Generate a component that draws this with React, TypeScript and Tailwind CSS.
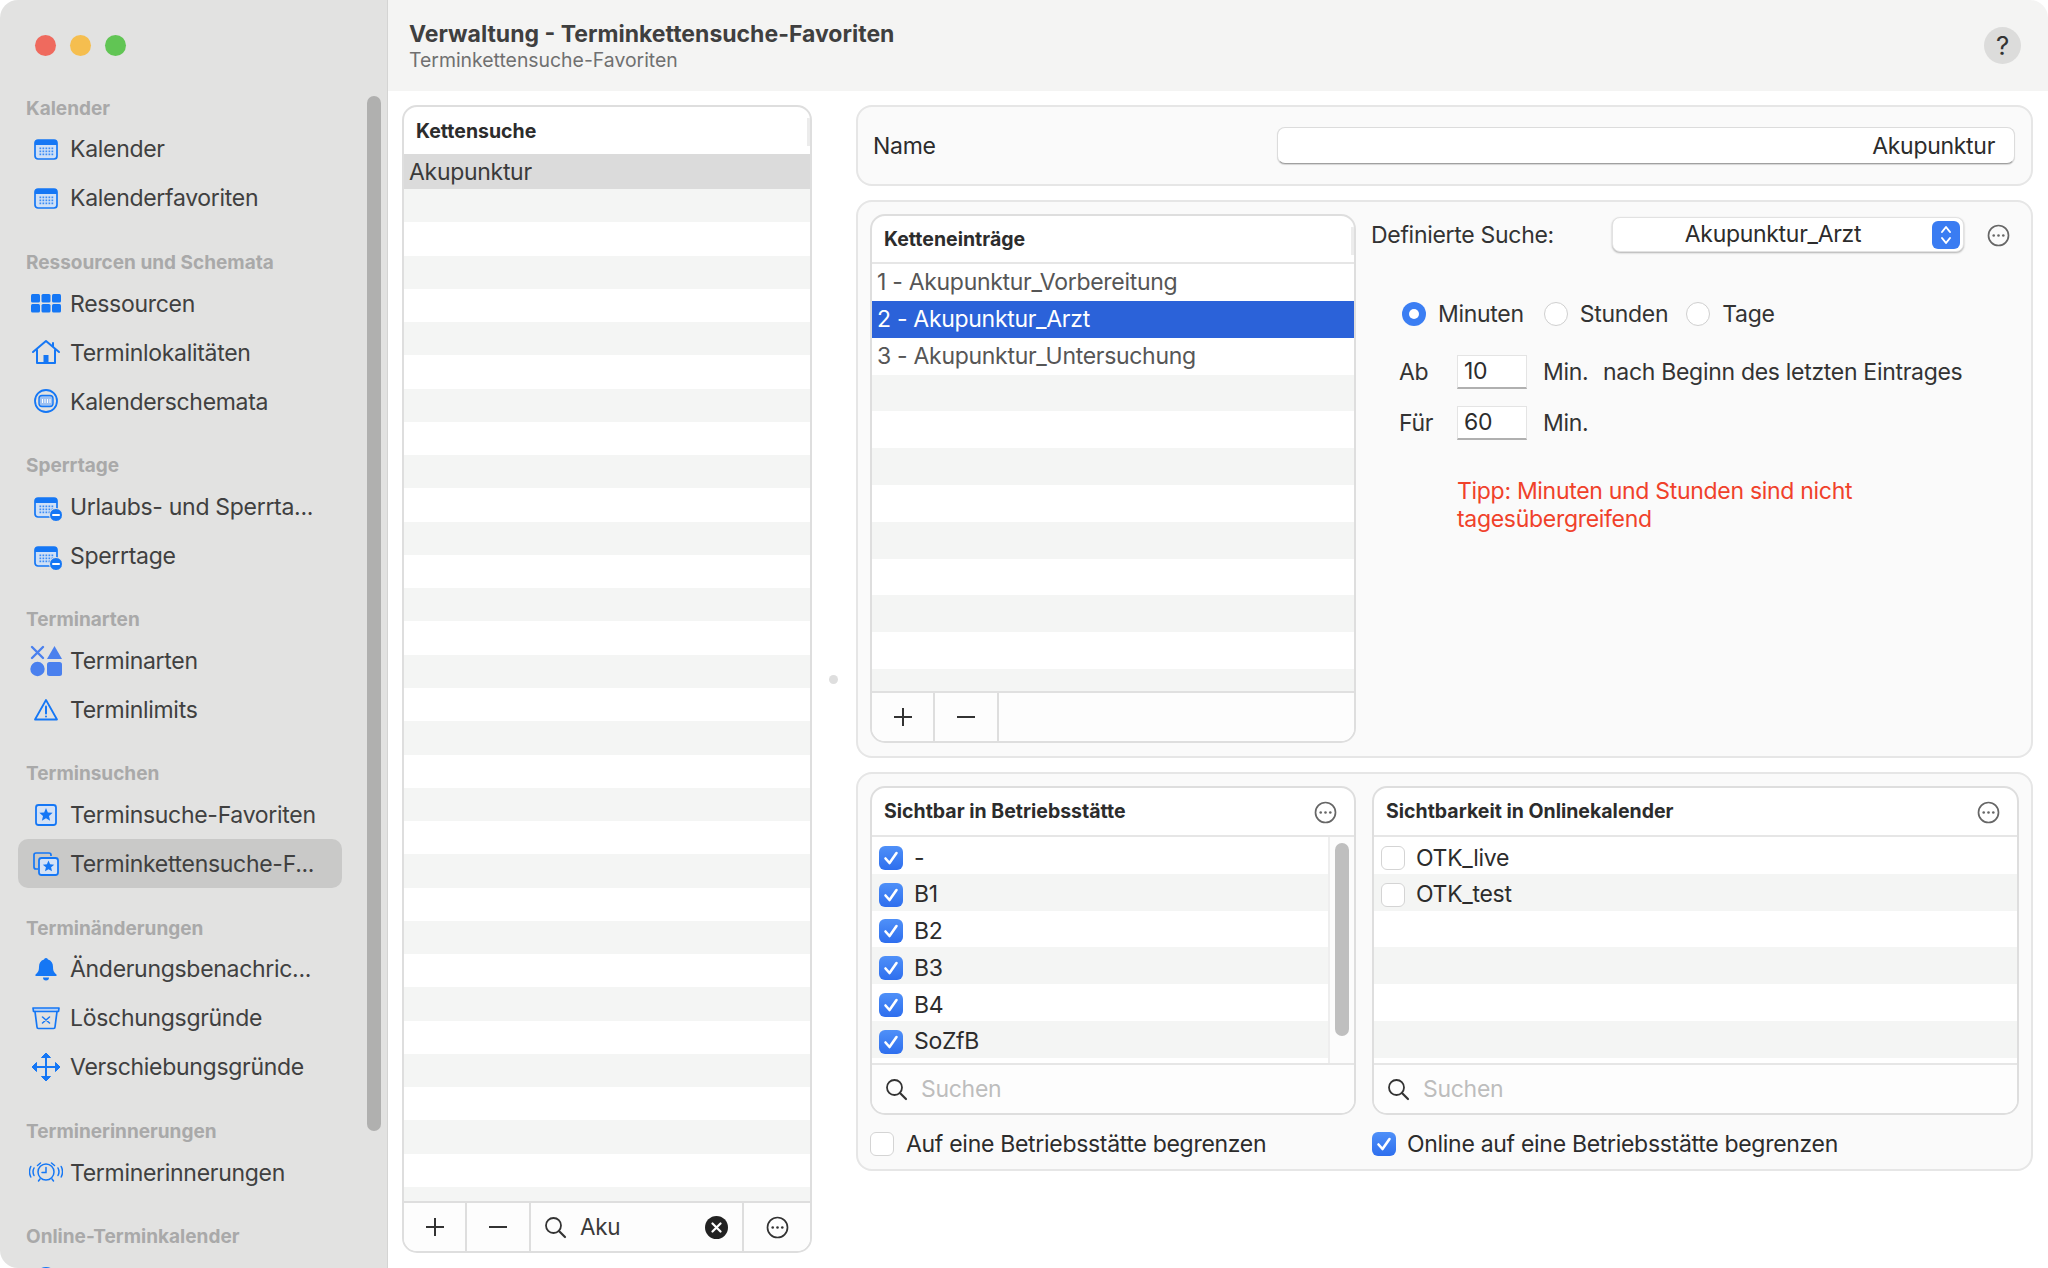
import React from "react";

const B = "#1577f5";

function Cal({ minus }: { minus?: boolean }) {
  return (
    <svg width="32" height="28" viewBox="0 0 32 28">
      <rect x="5" y="5" width="22" height="19" rx="3" fill="#cfe0f7" stroke={B} strokeWidth="1.7" />
      <path d="M5 8a3 3 0 0 1 3-3h16a3 3 0 0 1 3 3v2H5z" fill={B} />
      {[0, 1, 2, 3, 4].map((i) =>
        [0, 1, 2].map((j) => <rect key={i + "-" + j} x={9.5 + i * 3} y={12.5 + j * 3} width="1.7" height="1.7" fill={B} opacity="0.8" />)
      )}
      {minus && (
        <>
          <circle cx="26" cy="22" r="6.5" fill={B} stroke="#e2e2e1" strokeWidth="1" />
          <rect x="22" y="21" width="8" height="2" rx="1" fill="#fff" />
        </>
      )}
    </svg>
  );
}
const GridI = () => (
  <svg width="32" height="22" viewBox="0 0 32 22" fill={B}>
    {[1, 11.5, 22].map((x) => [2, 12].map((y) => <rect key={x + "-" + y} x={x} y={y} width="9" height="8.5" rx="1.5" />))}
  </svg>
);
const House = () => (
  <svg width="30" height="26" viewBox="0 0 30 26" fill="none" stroke={B} strokeWidth="2" strokeLinecap="round" strokeLinejoin="round">
    <path d="M2 13 15 2l13 11" />
    <path d="M22 4v3" />
    <path d="M6 11v13h18V11" />
    <rect x="12.5" y="16" width="5" height="8" fill={B} stroke="none" />
  </svg>
);
const CircleCal = () => (
  <svg width="28" height="26" viewBox="0 0 28 26" fill="none">
    <ellipse cx="14" cy="13" rx="11" ry="11" stroke={B} strokeWidth="1.8" />
    <rect x="7" y="7.5" width="14" height="11" rx="3" fill="#9cc0f2" stroke={B} strokeWidth="1.4" />
    <path d="M10.5 11v4M13 11v4M15.5 11v4M18 11v4" stroke="#fff" strokeWidth="1" />
  </svg>
);
const Shapes = () => (
  <svg width="34" height="32" viewBox="0 0 34 32" fill="#4a80ee">
    <path d="M3 2l11 11M14 2 3 13" stroke="#4a80ee" strokeWidth="2.4" fill="none" strokeLinecap="round" />
    <path d="M25.5 1 33 14H18z" />
    <circle cx="8.5" cy="24" r="7.2" />
    <rect x="18" y="17" width="15" height="14" rx="2.5" />
  </svg>
);
const Warn = () => (
  <svg width="28" height="26" viewBox="0 0 28 26" fill="none" stroke={B} strokeWidth="1.8" strokeLinejoin="round">
    <path d="M14 3 25 22.5H3z" />
    <path d="M14 9.5v7" strokeWidth="2" strokeLinecap="round" />
    <circle cx="14" cy="19.6" r="1" fill={B} stroke="none" />
  </svg>
);
const Star = ({ x, y, r }: { x: number; y: number; r: number }) => {
  const pts: string[] = [];
  for (let i = 0; i < 10; i++) {
    const a = -Math.PI / 2 + (i * Math.PI) / 5;
    const rr = i % 2 === 0 ? r : r * 0.45;
    pts.push(`${(x + rr * Math.cos(a)).toFixed(2)},${(y + rr * Math.sin(a)).toFixed(2)}`);
  }
  return <polygon points={pts.join(" ")} fill={B} />;
};
const StarBox = () => (
  <svg width="26" height="26" viewBox="0 0 26 26" fill="none">
    <rect x="3" y="3" width="20" height="20" rx="2.5" fill="#d4e2f6" stroke={B} strokeWidth="1.8" />
    <Star x={13} y={13} r={7} />
  </svg>
);
const StarBox2 = () => (
  <svg width="30" height="26" viewBox="0 0 30 26" fill="none">
    <path d="M20 5V4a2 2 0 0 0-2-2H5a2 2 0 0 0-2 2v12a2 2 0 0 0 2 2h2" stroke={B} strokeWidth="1.7" />
    <rect x="8" y="7" width="19" height="17" rx="2.5" fill="#d4e2f6" stroke={B} strokeWidth="1.8" />
    <Star x={17.5} y={15.5} r={6} />
  </svg>
);
const Bell = () => (
  <svg width="26" height="26" viewBox="0 0 26 26" fill={B}>
    <path d="M13 2a2 2 0 0 1 2 1.6c3.4 1 5 3.8 5 7.2 0 4.400 1.200 5.800 3.400 7.800.6.6.3 1.400-.5 1.400H3.100c-.8 0-1.100-.8-.5-1.400 2.200-2 3.400-3.400 3.400-7.800 0-3.400 1.600-6.200 5-7.200A2 2 0 0 1 13 2z" />
    <path d="M10 21.500h6a3 3 0 0 1-6 0z" />
  </svg>
);
const Tray = () => (
  <svg width="30" height="26" viewBox="0 0 30 26" fill="none" stroke={B} strokeWidth="1.7" strokeLinejoin="round" strokeLinecap="round">
    <path d="M2 3h26l-.5 3.500H2.500z" fill="#b9d2f5" />
    <path d="M4 6.500 6 22a1.500 1.500 0 0 0 1.500 1.500h15A1.500 1.500 0 0 0 24 22l2-15.500" />
    <path d="M11.500 12l7 6M18.500 12l-7 6" strokeWidth="1.5" />
  </svg>
);
const Move = () => (
  <svg width="30" height="30" viewBox="0 0 30 30" fill={B} stroke={B} strokeWidth="1">
    <path d="M15 4v22M4 15h22" strokeWidth="2" fill="none" />
    <path d="M15 1l4.500 4.500h-9zM15 29l4.500-4.500h-9zM1 15l4.500-4.500v9zM29 15l-4.500-4.500v9z" strokeLinejoin="round" />
  </svg>
);
const Alarm = () => (
  <svg width="34" height="26" viewBox="0 0 34 26" fill="none" stroke={B} strokeWidth="1.500" strokeLinecap="round">
    <circle cx="17" cy="13" r="8" />
    <path d="M17 8.500V13.500h-4" />
    <path d="M8.500 6.500l3-2.500M25.500 6.500l-3-2.500M11 20l-1.500 2M23 20l1.500 2" />
    <path d="M5 9c-1.300 2.500-1.300 5 0 7.500M1.800 7.500c-1.800 3.500-1.800 7 0 10.500M29 9c1.300 2.500 1.300 5 0 7.500M32.200 7.500c1.800 3.500 1.800 7 0 10.500" />
  </svg>
);
const Globe = () => (
  <svg width="26" height="26" viewBox="0 0 26 26" fill={B}>
    <circle cx="13" cy="13" r="11" />
  </svg>
);

const More = ({ c = "#666666", size = 23 }: { c?: string; size?: number }) => (
  <svg width={size} height={size} viewBox="0 0 23 23" fill="none">
    <circle cx="11.500" cy="11.500" r="10" stroke={c} strokeWidth="1.700" />
    <circle cx="6.700" cy="11.500" r="1.300" fill={c} />
    <circle cx="11.500" cy="11.500" r="1.300" fill={c} />
    <circle cx="16.300" cy="11.500" r="1.300" fill={c} />
  </svg>
);
const Search = () => (
  <svg width="24" height="24" viewBox="0 0 24 24" fill="none" stroke="#333" strokeWidth="1.800" strokeLinecap="round">
    <circle cx="10.500" cy="10.500" r="7.500" />
    <path d="M16 16l6 6" strokeWidth="2.200" />
  </svg>
);
const Plus = () => (
  <svg width="20" height="20" viewBox="0 0 20 20" stroke="#333" strokeWidth="2"><path d="M10 1v18M1 10h18" /></svg>
);
const Minus = () => (
  <svg width="20" height="20" viewBox="0 0 20 20" stroke="#333" strokeWidth="2"><path d="M1 10h18" /></svg>
);

type Item = { icon: React.ReactNode; label: string; active?: boolean };
const sections: { title: string; items: Item[] }[] = [
  { title: "Kalender", items: [{ icon: <Cal />, label: "Kalender" }, { icon: <Cal />, label: "Kalenderfavoriten" }] },
  {
    title: "Ressourcen und Schemata",
    items: [
      { icon: <GridI />, label: "Ressourcen" },
      { icon: <House />, label: "Terminlokalitäten" },
      { icon: <CircleCal />, label: "Kalenderschemata" },
    ],
  },
  { title: "Sperrtage", items: [{ icon: <Cal minus />, label: "Urlaubs- und Sperrta..." }, { icon: <Cal minus />, label: "Sperrtage" }] },
  { title: "Terminarten", items: [{ icon: <Shapes />, label: "Terminarten" }, { icon: <Warn />, label: "Terminlimits" }] },
  {
    title: "Terminsuchen",
    items: [
      { icon: <StarBox />, label: "Terminsuche-Favoriten" },
      { icon: <StarBox2 />, label: "Terminkettensuche-F...", active: true },
    ],
  },
  {
    title: "Terminänderungen",
    items: [
      { icon: <Bell />, label: "Änderungsbenachric..." },
      { icon: <Tray />, label: "Löschungsgründe" },
      { icon: <Move />, label: "Verschiebungsgründe" },
    ],
  },
  { title: "Terminerinnerungen", items: [{ icon: <Alarm />, label: "Terminerinnerungen" }] },
  { title: "Online-Terminkalender", items: [{ icon: <Globe />, label: "" }] },
];

function Sidebar() {
  return (
    <aside className="relative w-[388px] h-full shrink-0 bg-[#e2e2e1] border-r border-r-[#d4d4d3] overflow-hidden">
      <div className="flex gap-[14px] pl-[35px] pt-[35px]">
        <span className="w-[21px] h-[21px] rounded-full bg-[#ef6a5e]" />
        <span className="w-[21px] h-[21px] rounded-full bg-[#f5be4f]" />
        <span className="w-[21px] h-[21px] rounded-full bg-[#61c554]" />
      </div>
      <nav className="pt-[12.5px]">
        {sections.map((s) => (
          <div key={s.title} className="mt-[27.7px]">
            <div className="h-[24px] mb-[4.5px] pl-[26px] flex items-center text-[19px] font-bold tracking-normal text-[#a9a9a9] leading-none whitespace-nowrap">{s.title}</div>
            {s.items.map((it) => (
              <div
                key={it.label + s.title}
                className={`ml-[18px] mr-[45px] h-[49px] pl-[8px] flex items-center rounded-[10px] ${it.active ? "bg-[#c9c9c8]" : ""}`}
              >
                <span className="w-[40px] flex justify-center items-center shrink-0">{it.icon}</span>
                <span className="ml-[4px] pt-[1px] text-[23px] text-[#404040] whitespace-nowrap">{it.label}</span>
              </div>
            ))}
          </div>
        ))}
      </nav>
      <div className="absolute left-[367px] top-[96px] w-[14px] h-[1035px] rounded-full bg-[#b0b0af]" />
    </aside>
  );
}

function Stripes({ n, h, firstGray }: { n: number; h: number; firstGray: boolean }) {
  return (
    <>
      {Array.from({ length: n }).map((_, i) => (
        <div key={i} className={(i % 2 === 0) === firstGray ? "bg-[#f4f5f4]" : "bg-white"} style={{ height: h }} />
      ))}
    </>
  );
}

const panel = "border-2 border-[#e6e6e6] bg-[#fafafa] rounded-[16px]";
const list = "border-2 border-[#dedede] bg-white rounded-[15px] overflow-hidden flex flex-col";
const headText = "text-[19.5px] font-bold tracking-normal text-[#2c2c2c]";

function ToolCell({ w, children }: { w: string; children?: React.ReactNode }) {
  return <div className={`${w} h-full shrink-0 flex items-center justify-center border-r-2 border-r-[#dedede]`}>{children}</div>;
}

function LeftList() {
  return (
    <section className={`${list} w-[410px] h-[1148px] shrink-0`}>
      <div className={`relative h-[47px] shrink-0 flex items-center pl-[12px] pt-[3px] ${headText}`}>
        Kettensuche
        <span className="absolute right-0 top-[11px] w-[3px] h-[28px] bg-[#ececec]" />
      </div>
      <div className="h-[35px] shrink-0 bg-[#dbdbdb] flex items-center pl-[5px] pt-[2px] text-[23px] text-[#3a3a3a]">Akupunktur</div>
      <div className="flex-1 overflow-hidden">
        <Stripes n={31} h={33.27} firstGray />
      </div>
      <div className="h-[50px] shrink-0 bg-[#fdfdfd] border-t-2 border-t-[#dedede] flex items-stretch">
        <ToolCell w="w-[63px]"><Plus /></ToolCell>
        <ToolCell w="w-[64px]"><Minus /></ToolCell>
        <div className="w-[213px] shrink-0 flex items-center border-r-2 border-r-[#dedede] pl-[12px] text-[22.5px] text-[#3a3a3a]">
          <Search />
          <span className="ml-[13px]">Aku</span>
          <span className="ml-auto mr-[14px] w-[23px] h-[23px] rounded-full bg-[#222222] flex items-center justify-center">
            <svg width="11" height="11" viewBox="0 0 11 11" stroke="#fff" strokeWidth="2.200" strokeLinecap="round"><path d="M1.500 1.500l8 8M9.500 1.500l-8 8" /></svg>
          </span>
        </div>
        <div className="flex-1 flex items-center justify-center"><More c="#333333" /></div>
      </div>
    </section>
  );
}

function ChainList() {
  const rows = ["1 - Akupunktur_Vorbereitung", "2 - Akupunktur_Arzt", "3 - Akupunktur_Untersuchung"];
  return (
    <div className={`${list} w-[486px] h-[529px] shrink-0`}>
      <div className={`relative h-[48px] shrink-0 flex items-center pl-[12px] pt-[2px] border-b-2 border-b-[#e6e6e6] ${headText}`}>
        Ketteneinträge
        <span className="absolute right-0 top-[11px] w-[3px] h-[28px] bg-[#ececec]" />
      </div>
      <div className="flex-1 overflow-hidden">
        {rows.map((r, i) => (
          <div
            key={r}
            className={`h-[36.9px] flex items-center pl-[5px] text-[23px] ${i === 1 ? "bg-[#2b62d9] text-white" : "bg-white text-[#565656]"}`}
          >
            {r}
          </div>
        ))}
        <Stripes n={9} h={36.8} firstGray />
      </div>
      <div className="h-[50px] shrink-0 bg-[#fdfdfd] border-t-2 border-t-[#e0e0e0] flex items-stretch">
        <ToolCell w="w-[63px]"><Plus /></ToolCell>
        <ToolCell w="w-[64px]"><Minus /></ToolCell>
      </div>
    </div>
  );
}

function Radio({ on, label, className = "" }: { on?: boolean; label: string; className?: string }) {
  return (
    <span className={`flex items-center gap-[12px] ${className}`}>
      {on ? (
        <span className="w-[24px] h-[24px] rounded-full bg-[#3b7ef3] flex items-center justify-center">
          <span className="w-[10px] h-[10px] rounded-full bg-white" />
        </span>
      ) : (
        <span className="w-[24px] h-[24px] rounded-full bg-white border border-[#cfcfcf]" />
      )}
      <span>{label}</span>
    </span>
  );
}

function NumField({ v }: { v: string }) {
  return (
    <span className="w-[70px] h-[34px] bg-white flex items-center pl-[6px] border border-[#e4e4e4] border-b-2 border-b-[#b0b0b0] text-[23px] text-[#2c2c2c]">{v}</span>
  );
}

function SearchDetails() {
  return (
    <div className="flex-1 pl-[15px] text-[23px] text-[#333333]">
      <div className="flex items-center h-[36px] mt-[3px]">
        <span className="w-[241px] shrink-0">Definierte Suche:</span>
        <div className="relative w-[352px] h-[35px] -mt-[1px] bg-white rounded-[8px] border border-[#e2e2e2] shadow-[0_1px_2px_rgba(0,0,0,0.3)] flex items-center justify-center pr-[30px] text-[#2c2c2c]">
          Akupunktur_Arzt
          <span className="absolute right-[3px] top-[3px] w-[28px] h-[28px] rounded-[6px] bg-[#3a7cf2] flex items-center justify-center">
            <svg width="14" height="22" viewBox="0 0 14 22" fill="none" stroke="#fff" strokeWidth="2" strokeLinecap="round" strokeLinejoin="round">
              <path d="M3 8l4-5 4 5M3 14l4 5 4-5" />
            </svg>
          </span>
        </div>
        <span className="ml-[23px]"><More /></span>
      </div>
      <div className="flex items-center gap-[20px] mt-[43px] pl-[31px] h-[36px]">
        <Radio on label="Minuten" />
        <Radio label="Stunden" />
        <Radio label="Tage" className="-ml-[2px]" />
      </div>
      <div className="mt-[23px] pl-[28px] flex items-center h-[34px]">
        <span className="w-[58px]">Ab</span>
        <NumField v="10" />
        <span className="ml-[16px] w-[60px]">Min.</span>
        <span>nach Beginn des letzten Eintrages</span>
      </div>
      <div className="mt-[17px] pl-[28px] flex items-center h-[34px]">
        <span className="w-[58px]">Für</span>
        <NumField v="60" />
        <span className="ml-[16px]">Min.</span>
      </div>
      <div className="mt-[37px] ml-[86px] w-[450px] text-[#f0412a] leading-[28px]">
        Tipp: Minuten und Stunden sind nicht tagesübergreifend
      </div>
    </div>
  );
}

function Check({ on }: { on?: boolean }) {
  return on ? (
    <span className="w-[24px] h-[24px] shrink-0 rounded-[6px] bg-gradient-to-b from-[#4f90f8] to-[#2e6eee] flex items-center justify-center">
      <svg width="16" height="16" viewBox="0 0 16 16" fill="none" stroke="#fff" strokeWidth="2.600" strokeLinecap="round" strokeLinejoin="round">
        <path d="M2.500 8.500 6.500 13 13.500 3" />
      </svg>
    </span>
  ) : (
    <span className="w-[24px] h-[24px] shrink-0 rounded-[6px] bg-white border border-[#d4d4d4]" />
  );
}

function CheckList({ title, w, rows, on, scroll }: { title: string; w: string; rows: string[]; on: boolean; scroll: boolean }) {
  return (
    <div className={`${list} ${w} h-[329px] shrink-0`}>
      <div className={`relative h-[49px] shrink-0 flex items-center pl-[12px] pr-[17px] pt-[1px] justify-between border-b-2 border-b-[#e6e6e6] ${headText}`}>
        {title}
        <More />
      </div>
      <div className="relative flex-1 overflow-hidden">
        {Array.from({ length: 6 }).map((_, i) => (
          <div key={i} className={`h-[36.75px] pt-[5px] flex items-center pl-[7px] ${i % 2 === 1 ? "bg-[#f4f5f4]" : "bg-white"} ${scroll ? "mr-[26px]" : ""}`}>
            {rows[i] !== undefined && (
              <>
                <Check on={on} />
                <span className="ml-[11px] text-[23px] text-[#2c2c2c]">{rows[i]}</span>
              </>
            )}
          </div>
        ))}
        {scroll && (
          <div className="absolute right-0 top-0 bottom-0 w-[26px] bg-[#fcfcfc] border-l-2 border-l-[#eeeeee]">
            <div className="absolute left-[5px] top-[6px] w-[14px] h-[193px] rounded-full bg-[#bfbfbf]" />
          </div>
        )}
      </div>
      <div className="h-[50px] shrink-0 border-t-2 border-t-[#e6e6e6] bg-[#fdfdfd] flex items-center pl-[12px]">
        <Search />
        <span className="ml-[13px] text-[23px] text-[#bdbdbd]">Suchen</span>
      </div>
    </div>
  );
}

export default function App() {
  return (
    <div className="w-[2048px] h-[1268px] bg-white overflow-hidden tracking-[-0.3px]" style={{ fontFamily: "Inter, 'Noto Sans', sans-serif" }}>
      <div className="flex w-full h-full rounded-[18px] overflow-hidden bg-white">
        <Sidebar />
        <main className="flex-1 flex flex-col min-w-0 relative">
          <header className="h-[91px] shrink-0 bg-[#f4f4f3] flex items-start justify-between pl-[21px] pr-[27px]">
            <div className="pt-[20px]">
              <div className="text-[23px] leading-[28px] font-bold tracking-normal text-[#3f3f3f] whitespace-nowrap">Verwaltung - Terminkettensuche-Favoriten</div>
              <div className="text-[19.4px] leading-[24px] tracking-normal text-[#707070] whitespace-nowrap">Terminkettensuche-Favoriten</div>
            </div>
            <span className="mt-[27px] w-[37px] h-[37px] rounded-full bg-[#dcdcdb] flex items-center justify-center text-[26px] text-[#333333]">?</span>
          </header>
          <div className="flex pt-[14px] pl-[14px]">
            <LeftList />
            <div className="ml-[44px] w-[1177px] flex flex-col gap-[14px]">
              <div className={`${panel} h-[81px] flex items-center pl-[15px] pr-[16px] justify-between`}>
                <span className="text-[23px] text-[#2c2c2c] pt-[2px]">Name</span>
                <div className="w-[738px] h-[37px] bg-white rounded-[8px] border border-[#dcdcdc] border-b-[#a0a0a0] shadow-[0_1px_1px_rgba(0,0,0,0.15)] flex items-center justify-end pr-[19px] pt-[2px] text-[23px] text-[#2c2c2c]">Akupunktur</div>
              </div>
              <div className={`${panel} h-[558px] p-[12px] flex`}>
                <ChainList />
                <SearchDetails />
              </div>
              <div className={`${panel} h-[399px] pt-[12px] pl-[12px]`}>
                <div className="flex gap-[16px]">
                  <CheckList title="Sichtbar in Betriebsstätte" w="w-[486px]" rows={["-", "B1", "B2", "B3", "B4", "SoZfB"]} on scroll />
                  <CheckList title="Sichtbarkeit in Onlinekalender" w="w-[647px]" rows={["OTK_live", "OTK_test"]} on={false} scroll={false} />
                </div>
                <div className="flex mt-[16px] h-[26px] text-[23px] text-[#2c2c2c]">
                  <span className="w-[502px] flex items-center gap-[12px]"><Check /> Auf eine Betriebsstätte begrenzen</span>
                  <span className="flex items-center gap-[11px]"><Check on /> Online auf eine Betriebsstätte begrenzen</span>
                </div>
              </div>
            </div>
          </div>
          <span className="absolute left-[441px] top-[675px] w-[9px] h-[9px] rounded-full bg-[#dedede]" />
        </main>
      </div>
    </div>
  );
}
